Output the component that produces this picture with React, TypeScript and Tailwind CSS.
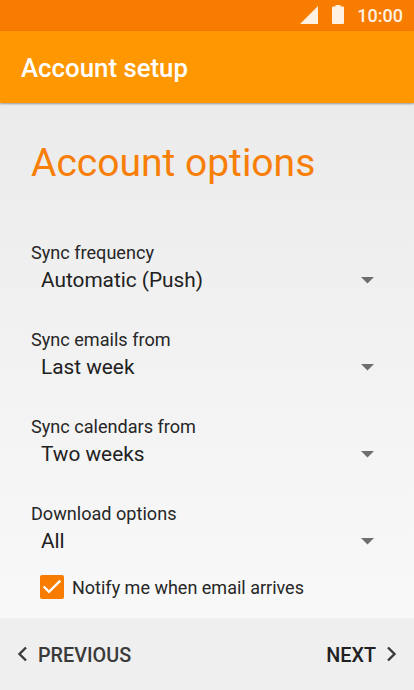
interface Option { label: string; value: string; }

const options: Option[] = [
  { label: 'Sync frequency', value: 'Automatic (Push)' },
  { label: 'Sync emails from', value: 'Last week' },
  { label: 'Sync calendars from', value: 'Two weeks' },
  { label: 'Download options', value: 'All' },
];

function StatusBar() {
  return (
    <div className="h-[31px] shrink-0 bg-[#f77c00] flex items-start justify-end pr-[11px] text-[#fff1e2]">
      <svg className="mt-[6px] w-[18px] h-[18px]" viewBox="0 0 18 18" fill="currentColor"><path d="M18 0v18H0z" /></svg>
      <svg className="mt-[5px] ml-[14px] w-3 h-[19px]" viewBox="0 0 12 19" fill="currentColor"><path d="M3.500 0h5v1.500H11q1 0 1 1v15.500q0 1-1 1H1q-1 0-1-1V2.500q0-1 1-1h2.500z" /></svg>
      <span className="ml-[13px] mt-[4px] text-[18px] leading-[24px] font-medium">10:00</span>
    </div>
  );
}

function OptionRow({ label, value }: Option) {
  return (
    <div className="h-[87px] pl-[31px] pr-[40px]">
      <p className="text-[18.1px] leading-[24px] text-[#262626]">{label}</p>
      <div className="flex items-center justify-between pl-[10px] mt-px">
        <span className="text-[20.8px] leading-[28px] text-[#212121]">{value}</span>
        <svg className="w-[13px] h-[7px]" viewBox="0 0 13 7" fill="#6e6e6e"><path d="M0 0h13L6.500 6.500z" /></svg>
      </div>
    </div>
  );
}

export default function App() {
  return (
    <div className="w-[414px] h-[690px] flex flex-col overflow-hidden font-['Roboto',sans-serif] bg-[#ececec]">
      <StatusBar />
      <header className="h-[72px] shrink-0 bg-[#ff9800] flex items-center pl-[21px] pt-px shadow-[0_1px_2px_rgba(0,0,0,0.35)] z-10">
        <h1 className="text-[25.8px] leading-[32px] font-medium text-white">Account setup</h1>
      </header>
      <main className="h-[515px] shrink-0 bg-linear-to-b from-[#ebebeb] to-[#f9f9f9]">
        <h2 className="pt-[35px] pl-[31px] text-[39px] leading-[50px] text-[#f77f08]">Account options</h2>
        <div className="pt-[53px]">
          {options.map((option) => <OptionRow key={option.label} {...option} />)}
        </div>
        <div className="flex items-start pl-[40px] -mt-[14px]">
          <svg className="w-6 h-6" viewBox="0 0 24 24"><rect width="24" height="24" rx="2" fill="#f77c00" /><path d="M3.700 11.500l5.300 5.300L20.300 5.700" fill="none" stroke="#fff" strokeWidth="2.400" /></svg>
          <span className="ml-[8px] mt-px text-[18px] leading-[24px] text-[#262626]">Notify me when email arrives</span>
        </div>
      </main>
      <footer className="h-[72px] shrink-0 bg-[#efefef] flex items-center justify-between pl-[17px] pr-[17px] text-[19.8px] leading-[28px] font-medium">
        <div className="flex items-center text-[#3a3a3a]">
          <svg className="w-[10px] h-[16px]" viewBox="0 0 10 16" fill="none" stroke="currentColor" strokeWidth="2.400"><path d="M9 1.500L2.500 8l6.500 6.500" /></svg>
          <span className="ml-[11px] pt-[3px]">PREVIOUS</span>
        </div>
        <div className="flex items-center text-[#212121]">
          <span className="mr-[11px] pt-[3px]">NEXT</span>
          <svg className="w-[10px] h-[16px] text-[#3a3a3a]" viewBox="0 0 10 16" fill="none" stroke="currentColor" strokeWidth="2.400"><path d="M1 1.500L7.500 8l-6.500 6.500" /></svg>
        </div>
      </footer>
    </div>
  );
}
